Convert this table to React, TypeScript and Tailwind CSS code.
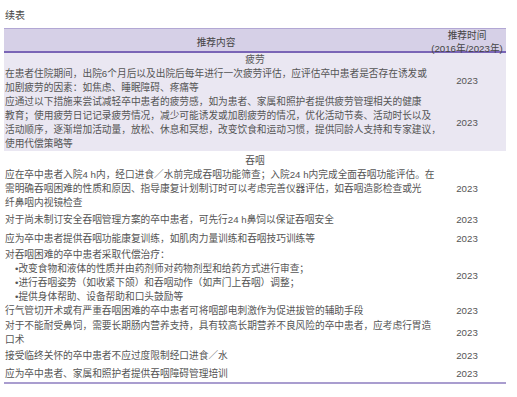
import React from "react";

const FONT = "font-['Liberation_Sans','Noto_Sans_CJK_SC',sans-serif]";

type RowProps = {
  lines: React.ReactNode[];
  pad?: string;
  year?: boolean;
};

function Row({ lines, pad = "", year = true }: RowProps) {
  return (
    <div className={`grid grid-cols-[424px_78px] ${pad}`}>
      <div className="pl-[1px]">
        {lines.map((l, i) => (
          <div key={i} className="whitespace-nowrap">
            {l}
          </div>
        ))}
      </div>
      <div className="flex items-center justify-center">{year ? "2023" : null}</div>
    </div>
  );
}

function Category({ label, pad = "" }: { label: string; pad?: string }) {
  return <div className={`text-center ${pad}`}>{label}</div>;
}

export default function App() {
  return (
    <div className={`${FONT} bg-white w-[517px] h-[397px] pl-[4px] pt-[9px] text-[#555555]`}>
      <div className="text-[10px] leading-[14px] mb-[5px] pl-[1px] text-[#444444]">续表</div>
      <div className="w-[502px] text-[9.7px] leading-[14px] border-t border-[#b2a7d4] border-b-2 border-b-[#a99dcf]">
        <div className="grid grid-cols-[424px_78px] h-[24px] bg-[#d6d0e7] border-b-2 border-[#7a65b6] leading-[13px] text-[#444444]">
          <div className="flex items-center justify-center">推荐内容</div>
          <div className="flex flex-col items-center justify-center">
            <div>推荐时间</div>
            <div className="whitespace-nowrap">(2016年/2023年)</div>
          </div>
        </div>
        <div className="bg-[#eae7f2]">
          <Category label="疲劳" />
          <Row
            lines={[
              "在患者住院期间，出院6个月后以及出院后每年进行一次疲劳评估，应评估卒中患者是否存在诱发或",
              "加剧疲劳的因素：如焦虑、睡眠障碍、疼痛等",
            ]}
          />
          <Row
            lines={[
              "应通过以下措施来尝试减轻卒中患者的疲劳感，如为患者、家属和照护者提供疲劳管理相关的健康",
              "教育；使用疲劳日记记录疲劳情况，减少可能诱发或加剧疲劳的情况，优化活动节奏、活动时长以及",
              "活动顺序，逐渐增加活动量，放松、休息和冥想，改变饮食和运动习惯，提供同龄人支持和专家建议，",
              "使用代偿策略等",
            ]}
          />
        </div>
        <Category label="吞咽" pad="pt-[3px]" />
        <Row
          lines={[
            "应在卒中患者入院4 h内，经口进食／水前完成吞咽功能筛查；入院24 h内完成全面吞咽功能评估。在",
            "需明确吞咽困难的性质和原因、指导康复计划制订时可以考虑完善仪器评估，如吞咽造影检查或光",
            "纤鼻咽内视镜检查",
          ]}
        />
        <Row pad="py-[3px]" lines={["对于尚未制订安全吞咽管理方案的卒中患者，可先行24 h鼻饲以保证吞咽安全"]} />
        <Row pad="py-[2px]" lines={["应为卒中患者提供吞咽功能康复训练，如肌肉力量训练和吞咽技巧训练等"]} />
        <Row
          lines={[
            "对吞咽困难的卒中患者采取代偿治疗：",
            <span className="pl-[10px]">•改变食物和液体的性质并由药剂师对药物剂型和给药方式进行审查；</span>,
            <span className="pl-[10px]">•进行吞咽姿势（如收紧下颌）和吞咽动作（如声门上吞咽）调整；</span>,
            <span className="pl-[10px]">•提供身体帮助、设备帮助和口头鼓励等</span>,
          ]}
        />
        <Row lines={["行气管切开术或有严重吞咽困难的卒中患者可将咽部电刺激作为促进拔管的辅助手段"]} />
        <Row
          pad="pt-[1px]"
          lines={[
            "对于不能耐受鼻饲，需要长期肠内营养支持，具有较高长期营养不良风险的卒中患者，应考虑行胃造",
            "口术",
          ]}
        />
        <Row pad="py-[2px]" lines={["接受临终关怀的卒中患者不应过度限制经口进食／水"]} />
        <Row pad="pt-[2px] pb-[1px]" lines={["应为卒中患者、家属和照护者提供吞咽障碍管理培训"]} />
      </div>
    </div>
  );
}
